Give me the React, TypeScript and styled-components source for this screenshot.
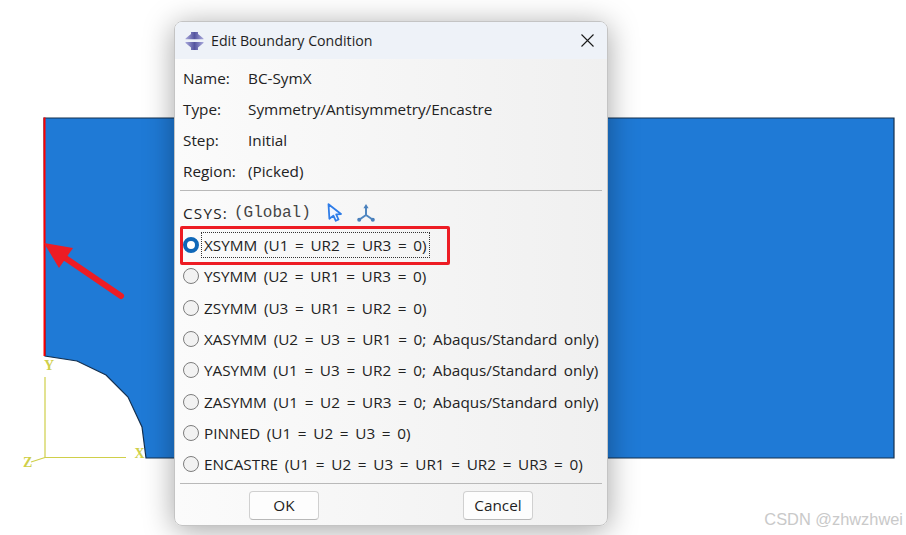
import React from 'react';
import styled, { createGlobalStyle } from 'styled-components';

const GlobalStyle = createGlobalStyle`
  html, body {
    margin: 0;
    padding: 0;
    background: #fff;
  }
`;

const Stage = styled.div`
  position: relative;
  width: 906px;
  height: 535px;
  overflow: hidden;
  background: #fff;
  font-family: 'Open Sans', 'Noto Sans', sans-serif;
`;

const Viewport = styled.svg`
  position: absolute;
  inset: 0;
`;

const Dialog = styled.div`
  position: absolute;
  left: 174px;
  top: 21px;
  width: 434px;
  height: 505px;
  box-sizing: border-box;
  display: flex;
  flex-direction: column;
  border: 1px solid #c4c4c4;
  border-radius: 8px;
  overflow: hidden;
  background: linear-gradient(90deg, #fbfbfb 0%, #f0f0f0 100%);
  box-shadow: 0 4px 30px rgba(0, 0, 0, 0.36);
`;

const TitleBar = styled.div`
  height: 37px;
  flex: none;
  display: flex;
  align-items: center;
  padding: 0 13px 0 10px;
  background: #eef2f8;
  color: #1f1f1f;
  font-size: 14.2px;
`;

const TitleText = styled.span`
  flex: 1;
  margin-left: 7px;
`;

const Body = styled.div`
  flex: 1;
  display: flex;
  flex-direction: column;
  padding: 3.5px 5px 0;
  color: #222;
  font-size: 15.3px;
`;

const InfoRow = styled.div`
  height: 31px;
  flex: none;
  display: grid;
  grid-template-columns: 65px 1fr;
  align-items: center;
  padding-left: 3px;
`;

const Separator = styled.div`
  height: 1px;
  flex: none;
  margin-top: 3px;
  background: #b9b9b9;
`;

const CsysRow = styled.div`
  height: 34px;
  flex: none;
  margin-top: 5px;
  display: flex;
  align-items: center;
  padding-left: 3px;
`;

const CsysLabel = styled.span`
  letter-spacing: 1.2px;
`;

const Mono = styled.span`
  margin-left: 6px;
  margin-right: 16px;
  padding-top: 1px;
  color: #444;
  font-family: 'Liberation Mono', monospace;
  font-size: 16px;
`;

const IconSlot = styled.svg`
  margin-right: 14px;
  flex: none;
`;

const RadioRow = styled.div`
  height: 31.3px;
  flex: none;
  display: flex;
  align-items: center;
  padding-left: 3px;
  white-space: nowrap;
`;

const RadioDot = styled.span<{ $checked?: boolean }>`
  width: 16px;
  height: 16px;
  flex: none;
  box-sizing: border-box;
  border-radius: 50%;
  margin-right: 5px;
  border: ${p => (p.$checked ? '4.5px solid #0f67b8' : '1.5px solid #7d7d7d')};
  background: ${p => (p.$checked ? '#fff' : '#f2f2f2')};
`;

const RadioLabel = styled.span<{ $focused?: boolean }>`
  word-spacing: 2.7px;
  outline: ${p => (p.$focused ? '1px dotted #333' : 'none')};
  outline-offset: 2px;
`;

const Footer = styled.div`
  flex: 1;
  display: flex;
  justify-content: flex-start;
  padding: 7px 0 0 69px;
  gap: 144px;
`;

const DialogButton = styled.button`
  width: 70px;
  height: 29px;
  box-sizing: border-box;
  padding: 0;
  border: 1px solid #d0d0d0;
  border-bottom-color: #b8b8b8;
  border-radius: 4px;
  background: #fdfdfd;
  color: #1f1f1f;
  font-family: inherit;
  font-size: 15.3px;
`;

const Highlight = styled.div`
  position: absolute;
  left: 179.5px;
  top: 226px;
  width: 270px;
  height: 39px;
  box-sizing: border-box;
  border: 3px solid #ed1c24;
  border-radius: 2px;
`;

const Watermark = styled.div`
  position: absolute;
  right: 3px;
  bottom: 6px;
  color: #c9c9c9;
  font-family: 'Liberation Sans', sans-serif;
  font-size: 16.4px;
`;

const options = [
  'XSYMM (U1 = UR2 = UR3 = 0)',
  'YSYMM (U2 = UR1 = UR3 = 0)',
  'ZSYMM (U3 = UR1 = UR2 = 0)',
  'XASYMM (U2 = U3 = UR1 = 0; Abaqus/Standard only)',
  'YASYMM (U1 = U3 = UR2 = 0; Abaqus/Standard only)',
  'ZASYMM (U1 = U2 = UR3 = 0; Abaqus/Standard only)',
  'PINNED (U1 = U2 = U3 = 0)',
  'ENCASTRE (U1 = U2 = U3 = UR1 = UR2 = UR3 = 0)',
];

const info = [
  ['Name:', 'BC-SymX'],
  ['Type:', 'Symmetry/Antisymmetry/Encastre'],
  ['Step:', 'Initial'],
  ['Region:', '(Picked)'],
];

const AppIcon = () => (
  <svg width="19" height="18" viewBox="0 0 19 18">
    <defs>
      <linearGradient id="appIconFill" x1="0" y1="0" x2="1" y2="0">
        <stop offset="0" stopColor="#a9a9dc" />
        <stop offset="0.5" stopColor="#55559f" />
        <stop offset="1" stopColor="#a9a9dc" />
      </linearGradient>
    </defs>
    <path d="M6 0 H13 V2 L18.5 6.5 V7.2 H0.5 V6.5 L6 2 Z" fill="url(#appIconFill)" />
    <path d="M0.5 10 H18.5 V11 L13 15.5 V18 H6 V15.5 L0.5 11 Z" fill="url(#appIconFill)" />
  </svg>
);

const CloseIcon = () => (
  <svg width="13" height="13" viewBox="0 0 13 13">
    <path d="M0.5 0.5 L12.5 12.5 M12.5 0.5 L0.5 12.5" stroke="#1a1a1a" strokeWidth="1.1" fill="none" />
  </svg>
);

const PickIcon = () => (
  <IconSlot width="16" height="19" viewBox="0 0 16 19">
    <path d="M1.5 1.2 L14 11 L9.2 11.3 L11.5 16.5 L8.8 17.8 L6.4 12.6 L2.4 15.8 Z" fill="#f2f6ff" stroke="#2f7de8" strokeWidth="1.8" strokeLinejoin="round" />
  </IconSlot>
);

const TriadIcon = () => (
  <IconSlot width="18" height="18" viewBox="0 0 18 18">
    <path d="M9 3 V11 L2.5 15.5 M9 11 L15.5 15.5" stroke="#4f86c0" strokeWidth="2" fill="none" />
    <path d="M9 0 L11.6 4.2 H6.4 Z" fill="#4a80bc" />
    <circle cx="2.2" cy="15.8" r="2" fill="#4a80bc" />
    <circle cx="15.8" cy="15.8" r="2" fill="#4a80bc" />
  </IconSlot>
);

const App: React.FC = () => {
  return (
    <Stage>
      <GlobalStyle />
      <Viewport width="906" height="535" viewBox="0 0 906 535">
        <path
          d="M44 118 H894 V458 H146 L142 427 L128 397 L106 375 L77 361 L45 356 Z"
          fill="#1f7ad6"
          stroke="#14304f"
          strokeWidth="1.2"
        />
        <path d="M44.5 117.5 V356" stroke="#ff0000" strokeWidth="2" fill="none" />
        <g stroke="#cfcf4a" strokeWidth="1.2" fill="none">
          <path d="M45 377 V457.5 H126" />
          <path d="M45 457.5 L31 462" />
        </g>
        <g fill="#cfcf4a" fontFamily="'Liberation Serif', serif" fontSize="14" fontWeight="700">
          <text x="44" y="369.5">Y</text>
          <text x="134.5" y="458">X</text>
          <text x="23" y="467">Z</text>
        </g>
        <path d="M121 296 L58 253" stroke="#ed1c24" strokeWidth="6" strokeLinecap="round" fill="none" />
        <path d="M44 243 L73 248 L59 268 Z" fill="#ed1c24" />
      </Viewport>

      <Dialog>
        <TitleBar>
          <AppIcon />
          <TitleText>Edit Boundary Condition</TitleText>
          <CloseIcon />
        </TitleBar>
        <Body>
          {info.map(([label, value]) => (
            <InfoRow key={label}>
              <span>{label}</span>
              <span>{value}</span>
            </InfoRow>
          ))}
          <Separator />
          <CsysRow>
            <CsysLabel>CSYS:</CsysLabel>
            <Mono>(Global)</Mono>
            <PickIcon />
            <TriadIcon />
          </CsysRow>
          {options.map((option, i) => (
            <RadioRow key={option}>
              <RadioDot $checked={i === 0} />
              <RadioLabel $focused={i === 0}>{option}</RadioLabel>
            </RadioRow>
          ))}
          <Separator />
          <Footer>
            <DialogButton>OK</DialogButton>
            <DialogButton>Cancel</DialogButton>
          </Footer>
        </Body>
      </Dialog>

      <Highlight />
      <Watermark>CSDN @zhwzhwei</Watermark>
    </Stage>
  );
};

export default App;
